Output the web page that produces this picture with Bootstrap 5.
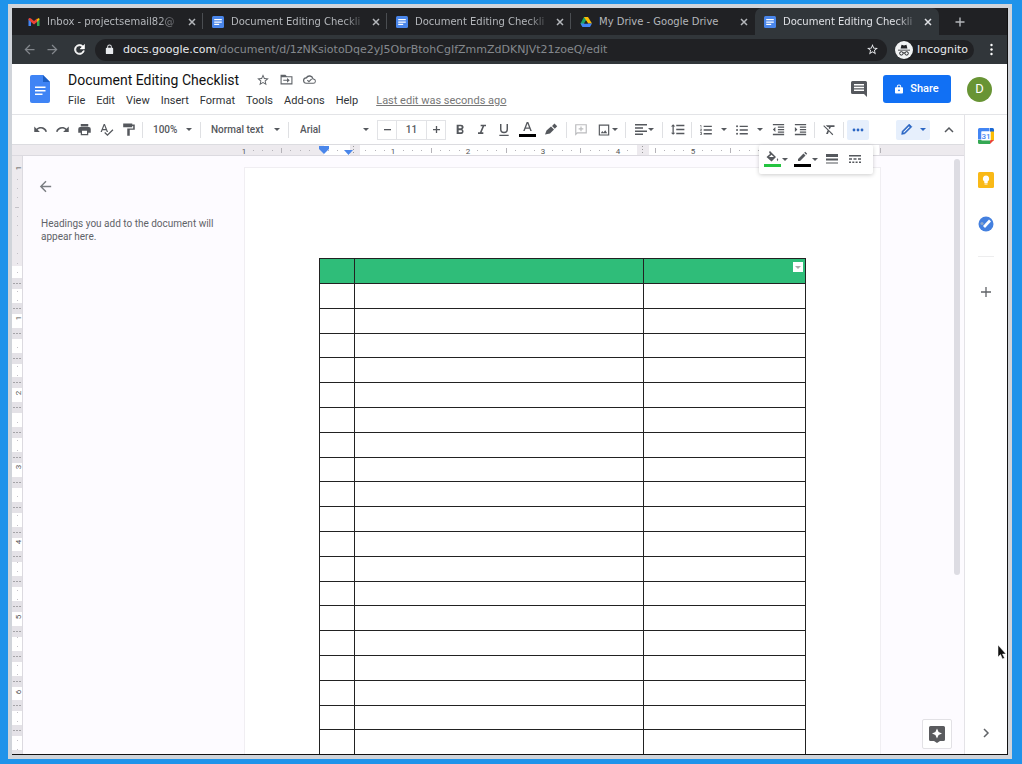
<!DOCTYPE html>
<html lang="en">
<head>
<meta charset="utf-8">
<meta name="viewport" content="width=device-width, initial-scale=1">
<title>Document Editing Checklist</title>
<link href="https://cdn.jsdelivr.net/npm/bootstrap@5.3.0/dist/css/bootstrap.min.css" rel="stylesheet">
<style>
:root{--ui:Roboto,"Liberation Sans",sans-serif;--chrome:"DejaVu Sans",sans-serif;--ink:#55585d}
body{font-family:var(--ui);font-size:11px;line-height:14px;background:#1f93ea;padding:4px 10px 5px 8px;color:#3c4043}
svg{display:block;fill:currentColor;flex:none}
button,select,input{font:inherit;color:inherit}
button{background:none;border:0;padding:0;display:flex;align-items:center;justify-content:center;flex:none}
.window-frame{border:4px solid #d0d4da;background:#fff}
.window-body{border:solid #111;border-width:0 1px 1px 0;min-height:0}
/* browser */
.tab-strip{height:27px;flex:none;background:#202124;padding-left:7px;font:10px/14px var(--chrome);color:#b4b7bb}
.browser-tab{flex:0 1 184px;min-width:0;padding:0 7px 0 9px;position:relative}
.browser-tab.sep::after{content:"";position:absolute;right:0;top:5px;height:16px;width:1px;background:#4a4d51}
.browser-tab.current{background:#31363a;color:#dfe1e5;border-radius:7px 7px 0 0}
.browser-tab a{color:inherit;text-decoration:none;white-space:nowrap;margin-left:7px;-webkit-mask-image:linear-gradient(to right,#000 112px,#0003 132px)}
.url-row{height:29px;flex:none;background:#31363a;padding:0 14px 0 10px;color:#83878c}
.url-pill{background:#202124;border-radius:11px;height:22px;color:#e8eaed;padding:0 8px 0 9px;font:11px/14px var(--chrome)}
.url-pill span{color:#85898e}
.incog{background:#202124;border-radius:11px;height:20px;color:#e8eaed;font:11px/14px var(--chrome);padding-right:6px}
/* header */
.doc-header{height:50px;flex:none;padding:0 15px 0 18px}
.doc-names{margin-left:18px}
.doc-title{font-size:14px;line-height:18px;border:0;padding:0;width:174px;color:#111;background:none}
.title-line{gap:10px;color:#5f6368}
.menu-line{gap:11px;margin-top:5px}
.menu-line a{color:#303336;text-decoration:none}
.menu-line a.edit-note{color:#777;text-decoration:underline;margin-left:7px}
.share-btn{background:#1170f4;color:#fff;width:68px;height:28px;border-radius:3px;font-weight:500;gap:7px}
.avatar{width:25px;height:25px;border-radius:50%;background:#689434;color:#fff;font-size:13px}
.work{border-top:1px solid #e3e4e7}
/* toolbar */
.tool-bar{height:30px;flex:none;padding:0 4px 0 17px;color:var(--ink);font-size:10px;font-weight:500;border-bottom:1px solid #dcdce0}
.tool-bar button{height:20px;width:22px}
.tool-bar .wide{width:24px}
.tool-bar .drop{width:30px;gap:1px}
.tool-bar .drop.list-drop{width:36px;gap:8px}
.tool-bar .drop.mode{width:34px;gap:7px}
.drop::after{content:"";border:3px solid transparent;border-top-color:currentColor;border-bottom:0}
.divide{width:1px;height:16px;background:#dfe0e3;margin:0 3px;flex:none}
.tool-bar select{appearance:none;border:0;padding:0 14px 0 7px;height:20px;outline:0;background:url("data:image/svg+xml,%3Csvg xmlns='http://www.w3.org/2000/svg' width='6' height='3'%3E%3Cpath d='M0 0h6L3 3z' fill='%2355585d'/%3E%3C/svg%3E") no-repeat right 5px center;flex:none}
.zoom-sel{width:51px}.style-sel{width:81px}.tool-bar .font-sel{width:82px;padding-left:8px}
.stepper{border:1px solid #e2e3e6;height:20px;margin:0 3px}
.stepper button{width:18px;height:18px}
.stepper input{width:31px;height:18px;border:solid #e2e3e6;border-width:0 1px;text-align:center;padding:0}
.tool-bar .on{background:#e6effc;color:#2b66c4;border-radius:2px}
.overflow-menu{position:absolute;right:-4px;top:25px;height:29px;background:#fff;border-radius:2px;box-shadow:0 1px 4px #0003;padding:0 6px 0 2px;z-index:3;color:var(--ink)}
.h-ruler{height:11px;flex:none;background:#edeaee;border-bottom:1px solid #dcdae0}
.ruler-text{font:8px Roboto,sans-serif;fill:#555}
.v-ruler{width:11px;background:#edeaee;border-right:1px solid #dcdae0}
/* canvas */
.doc-canvas{background:#fdfbff}
.outline-pane{width:221px;flex:none;padding:22px 20px 0 14px;font-size:10px;line-height:13px;color:#5f6368}
.outline-pane p{margin:22px 0 0 4px}
.sheet{flex:0 1 637px;background:#fff;margin-top:11px;border:1px solid #f0eef2;border-bottom:0;padding:90px 74px 0}
.check-grid{width:100%;height:547px;table-layout:fixed;border-collapse:collapse}
.check-grid td,.check-grid th{border:1px solid #222;padding:0}
.check-grid th{background:#2fbd79;height:25px}
.cell-menu{width:10px;height:10px;background:#fff;margin:-8px 2px 0 auto;color:#aaa}
.scroll-thumb{position:absolute;right:4px;top:3px;width:6px;height:416px;border-radius:3px;background:#dddce3}
.explore{position:absolute;right:12px;bottom:5px;width:30px;height:30px;background:#fff;border:1px solid #e2e1e5;border-radius:2px;color:#5a5b5e}
.side-rail{width:43px;flex:none;border-left:1px solid #e4e3e7;padding:13px 0 14px;color:#606367}
.side-rail hr{width:16px;margin:0;border-color:#b8b8bc}
.cursor{position:fixed;left:97.6vw;top:644px;z-index:9}
</style>
</head>
<body class="vh-100 overflow-hidden d-flex flex-column">
<svg class="d-none">
<symbol id="docs-ico" viewBox="0 0 12 12"><rect width="12" height="12" rx="1.5" fill="#4a86ea"/><path d="M2.2 3h7.600v1.300H2.200zM2.200 5.400h7.600v1.300H2.200zM2.200 7.800h5v1.300h-5z" fill="#fff"/></symbol>
<symbol id="x-ico" viewBox="0 0 8 8"><path d="M1 1l6 6M7 1L1 7" stroke="currentColor" stroke-width="1.500"/></symbol>
<symbol id="lock-ico" viewBox="0 0 24 24"><path d="M18 8h-1V6A5 5 0 0 0 7 6v2H6a2 2 0 0 0-2 2v10a2 2 0 0 0 2 2h12a2 2 0 0 0 2-2V10a2 2 0 0 0-2-2zM9 6a3 3 0 0 1 6 0v2H9z"/></symbol>
<symbol id="star-ico" viewBox="0 0 24 24"><path d="M22 9.240l-7.190-.62L12 2 9.190 8.630 2 9.240l5.460 4.730L5.820 21 12 17.270 18.180 21l-1.630-7.030zM12 15.400l-3.760 2.270 1-4.280-3.320-2.880 4.380-.38L12 6.100l1.710 4.040 4.380.38-3.320 2.880 1 4.280z"/></symbol>
<symbol id="back-ico" viewBox="0 0 24 24"><path d="M20 11H7.830l5.590-5.590L12 4l-8 8 8 8 1.410-1.410L7.830 13H20z"/></symbol>
</svg>
<main class="window-frame flex-grow-1 d-flex flex-column overflow-hidden">
<div class="window-body flex-grow-1 d-flex flex-column">

<nav class="tab-strip d-flex" aria-label="Tabs">
 <div class="browser-tab sep d-flex align-items-center"><svg width="12" height="12" viewBox="0 0 24 24"><path d="M1 5v15h5V10z" fill="#4285f4"/><path d="M23 5v15h-5V10z" fill="#34a853"/><path d="M18 6l4-2 1 3-5 5z" fill="#fbbc04"/><path d="M1 7c0-3 3-4 5-2l6 5 6-5v7l-6 5-6-5z" fill="#ea4335"/></svg><a href="#">Inbox - projectsemail82@</a><button class="ms-auto" aria-label="Close"><svg width="8" height="8"><use href="#x-ico"/></svg></button></div>
 <div class="browser-tab sep d-flex align-items-center"><svg width="12" height="12"><use href="#docs-ico"/></svg><a href="#">Document Editing Checkli</a><button class="ms-auto" aria-label="Close"><svg width="8" height="8"><use href="#x-ico"/></svg></button></div>
 <div class="browser-tab sep d-flex align-items-center"><svg width="12" height="12"><use href="#docs-ico"/></svg><a href="#">Document Editing Checkli</a><button class="ms-auto" aria-label="Close"><svg width="8" height="8"><use href="#x-ico"/></svg></button></div>
 <div class="browser-tab d-flex align-items-center"><svg width="12" height="12" viewBox="0 0 24 24"><path d="M8 2h8L5 22 1 15z" fill="#1fa463"/><path d="M8 2h8l8 13h-8z" fill="#fbbc04"/><path d="M1 15h23l-4 7H5z" fill="#4285f4"/><path d="M12 9l4 6H8z" fill="#202124"/></svg><a href="#" style="-webkit-mask-image:none">My Drive - Google Drive</a><button class="ms-auto" aria-label="Close"><svg width="8" height="8"><use href="#x-ico"/></svg></button></div>
 <div class="browser-tab current d-flex align-items-center"><svg width="12" height="12"><use href="#docs-ico"/></svg><a href="#">Document Editing Checkli</a><button class="ms-auto" aria-label="Close"><svg width="8" height="8"><use href="#x-ico"/></svg></button></div>
 <button class="ms-3" style="color:inherit" aria-label="New tab"><svg width="10" height="10" viewBox="0 0 10 10"><path d="M5 .5v9M.5 5h9" stroke="currentColor" stroke-width="1.400"/></svg></button>
</nav>

<div class="url-row d-flex align-items-center">
 <button aria-label="Back"><svg width="15" height="15"><use href="#back-ico"/></svg></button>
 <button class="ms-2" aria-label="Forward"><svg width="15" height="15" viewBox="0 0 24 24"><path d="M4 11h12.170l-5.590-5.590L12 4l8 8-8 8-1.410-1.410L16.170 13H4z"/></svg></button>
 <button class="ms-2 ps-1 text-white me-2" aria-label="Reload"><svg width="15" height="15" viewBox="0 0 24 24"><path d="M17.650 6.350A8 8 0 1 0 19.730 14h-2.080A6 6 0 1 1 12 6c1.660 0 3.140.69 4.220 1.780L13 11h7V4z" stroke="currentColor"/></svg></button>
 <div class="url-pill d-flex align-items-center flex-grow-1"><svg width="11" height="11" class="me-2"><use href="#lock-ico"/></svg><div class="flex-grow-1">docs.google.com<span>/document/d/1zNKsiotoDqe2yJ5ObrBtohCgIfZmmZdDKNJVt21zoeQ/edit</span></div><button aria-label="Bookmark"><svg width="13" height="13"><use href="#star-ico"/></svg></button></div>
 <div class="incog ms-2 d-flex align-items-center"><svg width="18" height="18" viewBox="0 0 24 24" class="me-1"><circle cx="12" cy="12" r="12" fill="#f1f3f4"/><path d="M4 11.500h16v1H4zM7.500 10l1.200-5 3.300 1 3.300-1 1.200 5z" fill="#202124"/><g fill="none" stroke="#202124" stroke-width="1.300"><circle cx="8.500" cy="16.500" r="2.300"/><circle cx="15.500" cy="16.500" r="2.300"/><path d="M10.800 16q1.200-.7 2.400 0"/></g></svg>Incognito</div>
 <button class="ms-3 text-white" aria-label="Menu"><svg width="3" height="13" viewBox="0 0 3 13"><circle cx="1.500" cy="2" r="1.200"/><circle cx="1.500" cy="6.500" r="1.200"/><circle cx="1.500" cy="11" r="1.200"/></svg></button>
</div>

<header class="doc-header d-flex align-items-center">
 <svg width="20" height="28" viewBox="0 0 20 28"><path d="M2 0h11l7 7v19a2 2 0 0 1-2 2H2a2 2 0 0 1-2-2V2a2 2 0 0 1 2-2z" fill="#3f84f5"/><path d="M13 0l7 7h-7z" fill="#1c5fc4"/><path d="M5 11.500h10.500V13H5zM5 15h10.500v1.500H5zM5 18.500h7.500V20H5z" fill="#fff"/></svg>
 <div class="doc-names flex-grow-1">
  <div class="title-line d-flex align-items-center"><input class="doc-title" value="Document Editing Checklist" aria-label="Document title">
   <button class="ms-1" aria-label="Star"><svg width="14" height="14"><use href="#star-ico"/></svg></button>
   <button aria-label="Move"><svg width="13" height="13" viewBox="0 0 24 24"><path d="M1 3h9l2.500 3H23v15H1zM3 8v11h18V8z" fill-rule="evenodd"/><path d="M6 12.500h7V9l5 4.500-5 4.500v-3.500H6z"/></svg></button>
   <button aria-label="Saved to Drive"><svg width="13" height="13" viewBox="0 0 24 24"><path d="M19.350 10.040A7.490 7.490 0 0 0 5.350 8.040 6 6 0 0 0 6 20h13a5 5 0 0 0 .35-9.960zM19 18H6a4 4 0 0 1 .5-8h.6a5.500 5.500 0 0 1 10.500 2H19a3 3 0 0 1 0 6z"/><path d="M8 13l3 3 5-5" fill="none" stroke="currentColor" stroke-width="2"/></svg></button>
  </div>
  <nav class="menu-line d-flex" aria-label="Document menu"><a href="#">File</a><a href="#">Edit</a><a href="#">View</a><a href="#">Insert</a><a href="#">Format</a><a href="#">Tools</a><a href="#">Add-ons</a><a href="#">Help</a><a href="#" class="edit-note">Last edit was seconds ago</a></nav>
 </div>
 <button class="me-3" style="color:#55585d" aria-label="Comments"><svg width="16" height="16" viewBox="0 0 16 16"><path d="M1.500 0h13A1.500 1.500 0 0 1 16 1.500V16l-3-3H1.500A1.500 1.500 0 0 1 0 11.500v-10A1.500 1.500 0 0 1 1.500 0z"/><path d="M3 3h10v1.500H3zM3 5.800h10v1.500H3zM3 8.600h10v1.500H3z" fill="#fff"/></svg></button>
 <button class="share-btn"><svg width="8" height="10" viewBox="0 0 18 22"><path d="M16 7h-2V6A5 5 0 0 0 4 6v1H2a2 2 0 0 0-2 2v10a2 2 0 0 0 2 2h14a2 2 0 0 0 2-2V9a2 2 0 0 0-2-2zM6 6a3 3 0 0 1 6 0v1H6zm3 6a2 2 0 1 1 0 4 2 2 0 0 1 0-4z" fill-rule="evenodd"/></svg>Share</button>
 <button class="avatar ms-3" aria-label="Account">D</button>
</header>

<div class="work d-flex flex-grow-1 overflow-hidden">
<div class="flex-grow-1 d-flex flex-column" style="min-width:0">
 <div class="tool-bar d-flex align-items-center" role="toolbar">
  <button aria-label="Undo"><svg width="15" height="15" viewBox="0 0 24 24"><path d="M12.500 8c-2.650 0-5.050.99-6.900 2.600L2 7v9h9l-3.620-3.620A7.970 7.970 0 0 1 20.080 16l2.370-.78A10.500 10.500 0 0 0 12.500 8z"/></svg></button>
  <button aria-label="Redo"><svg width="15" height="15" viewBox="0 0 24 24"><path d="M11.500 8c2.650 0 5.050.99 6.900 2.600L22 7v9h-9l3.620-3.620A7.970 7.970 0 0 0 3.920 16l-2.370-.78A10.500 10.500 0 0 1 11.500 8z"/></svg></button>
  <button aria-label="Print"><svg width="15" height="15" viewBox="0 0 24 24"><path d="M19 8H5a3 3 0 0 0-3 3v6h4v4h12v-4h4v-6a3 3 0 0 0-3-3zm-3 11H8v-5h8zM18 3H6v4h12z"/></svg></button>
  <button aria-label="Spelling"><svg width="15" height="15" viewBox="0 0 24 24"><path d="M12.450 16h2.090L9.430 3H7.570L2.460 16h2.090l1.120-3h5.640zm-6.020-5L8.500 5.480 10.570 11zm15.160.59l-8.090 8.090L9.830 16l-1.410 1.410 5.090 5.090L23 13z"/></svg></button>
  <button aria-label="Paint format"><svg width="15" height="15" viewBox="0 0 24 24"><path d="M18 4V2.500H3.500v6H18V6.500h1.500v4H10V22h4v-9.500h8V4z"/></svg></button>
  <span class="divide"></span>
  <select class="zoom-sel" aria-label="Zoom"><option>100%</option></select>
  <span class="divide"></span>
  <select class="style-sel" aria-label="Styles"><option>Normal text</option></select>
  <span class="divide"></span>
  <select class="font-sel" aria-label="Font"><option>Arial</option></select>
  <div class="stepper d-flex"><button aria-label="Decrease font size"><svg width="7" height="7" viewBox="0 0 7 7"><path d="M0 3h7v1.300H0z"/></svg></button><input value="11" aria-label="Font size"><button aria-label="Increase font size"><svg width="7" height="7" viewBox="0 0 7 7"><path d="M0 3h7v1.300H0zM2.850 0h1.300v7h-1.300z"/></svg></button></div>
  <button aria-label="Bold"><svg width="16" height="16" viewBox="0 0 24 24"><path d="M15.600 10.790A4 4 0 0 0 17.500 7.500 4 4 0 0 0 13.500 4H7v14h7.040a3.970 3.970 0 0 0 1.560-7.210zM10 6.500h3a1.500 1.500 0 0 1 0 3h-3zm3.500 9H10v-3h3.500a1.500 1.500 0 0 1 0 3z"/></svg></button>
  <button aria-label="Italic"><svg width="16" height="16" viewBox="0 0 24 24"><path d="M10 4v2.500h2.700L8.900 15.500H6V18h8v-2.500h-2.500l3.800-9H18V4z"/></svg></button>
  <button aria-label="Underline"><svg width="16" height="16" viewBox="0 0 24 24"><path d="M12 17a6 6 0 0 0 6-6V3h-2.200v8a3.800 3.800 0 0 1-7.600 0V3H6v8a6 6 0 0 0 6 6zM5 19v2h14v-2z"/></svg></button>
  <button class="wide" aria-label="Text color"><svg width="17" height="17" viewBox="0 0 17 17"><path d="M7.700 1L4.200 10h1.500l.8-2.200h4l.8 2.200h1.500L9.300 1zM7 6.500l1.500-4.100L10 6.500z"/><path d="M0 13h17v3H0z" fill="#000"/></svg></button>
  <button class="wide" aria-label="Highlight color"><svg width="14" height="14" viewBox="0 0 14 14"><path d="M1 11.500l1.500-4L7 3.500l3 3L6 10.500zM8 3l2.500-2.500 2.700 2.700L10.800 5.800z"/></svg></button>
  <span class="divide"></span>
  <button style="opacity:.4" aria-label="Add comment"><svg width="14" height="14" viewBox="0 0 24 24"><path d="M2 2h20v16H6l-4 4zM4 4v12.500L5.500 16H20V4zM11 6h2v3h3v2h-3v3h-2v-3H8V9h3z" fill-rule="evenodd"/></svg></button>
  <button class="drop" aria-label="Insert image"><svg width="14" height="14" viewBox="0 0 24 24"><path d="M19 4.500v15H5v-15zM21 2.500H3v19h18zM14.100 12.400l-3 3.870L9 13.640 6.500 17.500h11z" fill-rule="evenodd"/></svg></button>
  <span class="divide"></span>
  <button class="drop" aria-label="Align"><svg width="13" height="13" viewBox="0 0 13 13"><path d="M1 1h12v1.500H1zM1 4.200h8v1.500H1zM1 7.400h12v1.500H1zM1 10.600h8v1.500H1z"/></svg></button>
  <span class="divide"></span>
  <button aria-label="Line spacing"><svg width="15" height="15" viewBox="0 0 24 24"><path d="M6 7h2.500L5 3.500 1.500 7H4v10H1.500L5 20.500 8.500 17H6zM10 4.500v2.200h13V4.500zM10 19.500h13v-2.200H10zM10 13.100h13v-2.200H10z"/></svg></button>
  <span class="divide"></span>
  <button class="drop list-drop" aria-label="Numbered list"><svg width="14" height="14" viewBox="0 0 24 24"><path d="M2 17h2v.5H3v1h1v.5H2v1h3v-4H2zM3 8h1V4H2v1h1zM2 11h1.800L2 13.100v.9h3v-1H3.200L5 10.900V10H2zM8 4.500v2.200h14V4.500zM8 19.500h14v-2.200H8zM8 13.100h14v-2.200H8z"/></svg></button>
  <button class="drop list-drop" aria-label="Bulleted list"><svg width="14" height="14" viewBox="0 0 24 24"><circle cx="3.500" cy="5.500" r="1.700"/><circle cx="3.500" cy="12" r="1.700"/><circle cx="3.500" cy="18.500" r="1.700"/><path d="M8 4.500v2.200h14V4.500zM8 19.500h14v-2.200H8zM8 13.100h14v-2.200H8z"/></svg></button>
  <button aria-label="Decrease indent"><svg width="15" height="15" viewBox="0 0 24 24"><path d="M11 17h10v-2H11zM3 12l4 4V8zM3 21h18v-2.200H3zM3 3v2.200h18V3zM11 9h10V7H11zM11 13h10v-2H11z"/></svg></button>
  <button aria-label="Increase indent"><svg width="15" height="15" viewBox="0 0 24 24"><path d="M3 21h18v-2.200H3zM3 8v8l4-4zM11 17h10v-2H11zM3 3v2.200h18V3zM11 9h10V7H11zM11 13h10v-2H11z"/></svg></button>
  <span class="divide"></span>
  <button aria-label="Clear formatting"><svg width="15" height="15" viewBox="0 0 24 24"><path d="M3.270 5L2 6.270l6.970 6.970L6.500 19h3l1.570-3.660L16.730 21 18 19.730zM6 5v.18L8.820 8h2.400l-.72 1.680 2.100 2.100L14.210 8H20V5z"/></svg></button>
  <span class="divide"></span>
  <div class="position-relative">
   <button class="on" aria-label="More" aria-expanded="true"><svg width="12" height="4" viewBox="0 0 12 4"><circle cx="2" cy="2" r="1.400"/><circle cx="6" cy="2" r="1.400"/><circle cx="10" cy="2" r="1.400"/></svg></button>
   <div class="overflow-menu d-flex align-items-center">
    <button class="drop" aria-label="Background color"><svg width="17" height="18" viewBox="0 0 17 18"><path d="M6 1l6 6-4.500 4.500L2.500 7 6 4 5 2zM5 7h5L7.500 4.700z" fill-rule="evenodd"/><path d="M13.500 8q1.500 2 0 3.200-1.500-1.200 0-3.200z"/><path d="M0 14h17v3H0z" fill="#24c440"/></svg></button>
    <button class="drop" aria-label="Border color"><svg width="17" height="18" viewBox="0 0 17 18"><path d="M4 9l5.500-5.500 2 2L6 11H4zM10.200 2.800l1-1 2 2-1 1z"/><path d="M0 14h17v3H0z" fill="#000"/></svg></button>
    <button aria-label="Border width"><svg width="12" height="12" viewBox="0 0 12 12"><path d="M0 1h12v3H0zM0 5.500h12v2H0zM0 9.500h12v1H0z"/></svg></button>
    <button class="wide" aria-label="Border dash"><svg width="12" height="12" viewBox="0 0 12 12"><path d="M0 2h12v1.500H0zM0 5.300h3v1.500H0zM4.500 5.300h3v1.500h-3zM9 5.300h3v1.500H9zM0 8.600h2v1.500H0zM3.300 8.600h2v1.500h-2zM6.600 8.600h2v1.500h-2zM10 8.600h2v1.500h-2z"/></svg></button>
   </div>
  </div>
  <button class="drop mode on ms-auto me-2" aria-label="Editing mode"><svg width="13" height="13" viewBox="0 0 24 24"><path d="M3 21l1-6L17 2l5 5L9 20zM6 16l-.5 2.500L8 18 18.500 7.500 16.500 5.500z" fill-rule="evenodd" stroke="currentColor"/></svg></button>
  <button aria-label="Hide menus"><svg width="10" height="10" viewBox="0 0 10 10"><path d="M1 7l4-4 4 4" fill="none" stroke="currentColor" stroke-width="1.500"/></svg></button>
 </div>
 <svg class="h-ruler w-100" id="hRuler" role="img" aria-label="Ruler"></svg>
 <div class="d-flex flex-grow-1 overflow-hidden">
  <svg class="v-ruler h-auto" id="vRuler" role="img" aria-label="Vertical ruler"></svg>
  <div class="doc-canvas position-relative flex-grow-1 d-flex overflow-hidden">
   <aside class="outline-pane"><button style="color:#7b7e82" aria-label="Close outline"><svg width="17" height="17"><use href="#back-ico"/></svg></button><p>Headings you add to the document will appear here.</p></aside>
   <article class="sheet"><table class="check-grid" aria-label="Checklist"><colgroup><col style="width:35px"><col><col style="width:162px"></colgroup><thead><tr><th></th><th></th><th><button class="cell-menu" aria-label="Table options"><svg width="6" height="3" viewBox="0 0 6 3"><path d="M0 0h6L3 3z"/></svg></button></th></tr></thead><tbody id="rows"></tbody></table></article>
   <div class="scroll-thumb"></div>
   <button class="explore" aria-label="Explore"><svg width="16" height="17" viewBox="0 0 16 17"><path d="M1.500 0h13A1.500 1.500 0 0 1 16 1.500v12a1.500 1.500 0 0 1-1.500 1.500H11l-3 2-3-2H1.500A1.500 1.500 0 0 1 0 13.500v-12A1.500 1.500 0 0 1 1.500 0z"/><path d="M8 2.500l1.600 3.400L13 7.500 9.600 9.100 8 12.500 6.400 9.100 3 7.500l3.400-1.600z" fill="#fff"/></svg></button>
  </div>
 </div>
</div>
<aside class="side-rail d-flex flex-column align-items-center">
 <button aria-label="Calendar"><svg width="16" height="16" viewBox="0 0 16 16"><path d="M1.500 0h10v3.500h-8v8H0v-10A1.500 1.500 0 0 1 1.500 0z" fill="#4285f4"/><path d="M12 0h2.500A1.500 1.500 0 0 1 16 1.500V4h-4z" fill="#1967d2"/><path d="M12.500 3.500H16v9h-3.500z" fill="#fbbc04"/><path d="M0 12h12v4H1.500A1.500 1.500 0 0 1 0 14.500z" fill="#34a853"/><path d="M12 12h4l-4 4z" fill="#ea4335"/><path d="M3.500 3.500h9v9h-9z" fill="#fff"/><text x="8" y="11" font-size="8" font-weight="500" text-anchor="middle" fill="#4285f4">31</text></svg></button>
 <button class="mt-4" aria-label="Keep"><svg width="16" height="24" viewBox="0 0 16 24"><rect y="4" width="16" height="16" rx="1.500" fill="#f9b917"/><path d="M8 7.500a3.200 3.200 0 0 0-1.700 5.900V15h3.400v-1.600A3.200 3.200 0 0 0 8 7.500zM6.500 15.500h3v1h-3z" fill="#fff"/></svg></button>
 <button class="mt-4" aria-label="Tasks"><svg width="16" height="16" viewBox="0 0 16 16"><circle cx="8" cy="8" r="7.500" fill="#4480df"/><circle cx="4" cy="7.500" r="1.600" fill="#8da6c8"/><path d="M5 10l2 2 6-6.500-2-2z" fill="#fff"/></svg></button>
 <hr class="mt-4">
 <button class="mt-4" aria-label="Get add-ons"><svg width="10" height="22" viewBox="0 0 10 22"><path d="M5 6v10M0 11h10" stroke="currentColor" stroke-width="1.300"/></svg></button>
 <button class="mt-auto" aria-label="Hide side panel"><svg width="10" height="14" viewBox="0 0 10 14"><path d="M3 3l4 4-4 4" fill="none" stroke="currentColor" stroke-width="1.500"/></svg></button>
</aside>
</div>
</div>
</main>
<svg class="cursor" width="10" height="16" viewBox="0 0 10 16"><path d="M1 1v12l2.500-2.500L5.500 15l2-1-2-4H9z" fill="#111" stroke="#fff" stroke-width=".5"/></svg>
<script src="https://cdn.jsdelivr.net/npm/bootstrap@5.3.0/dist/js/bootstrap.bundle.min.js"></script>
<script>
// blank checklist rows
document.getElementById('rows').innerHTML = '<tr><td></td><td></td><td></td></tr>'.repeat(21);

const INCH = 74.8, rect = (x, y, w, h, c) => `<rect x="${x}" y="${y}" width="${w}" height="${h}" fill="${c}"/>`;

// horizontal ruler: white spans are the table columns
const zeroX = 306.5;
let h = rect(312, 0, 26, 10, '#fff') + rect(348, 0, 277, 10, '#fff') + rect(637, 0, 230, 10, '#fff');
for (let i = -8; i <= 60; i++) {
  const x = Math.round(zeroX + i * INCH / 8);
  if (i % 8 === 0) { if (i && x < 860) h += `<text class="ruler-text" x="${x}" y="9" text-anchor="middle">${Math.abs(i / 8)}</text>`; }
  else if (x < 870 && (x < 335 || x > 350) && (x < 624 || x > 638)) h += rect(x, i % 4 ? 5 : 3, 1, i % 4 ? 1 : 5, '#b5b3b8');
}
for (const x of [341, 630]) for (const y of [1, 4, 7]) h += rect(x, y, 1, 1, '#999');
h += '<path d="M307 1h10v3l-5 5-5-5z" fill="#4a86ea"/><path d="M332 5h9l-4.500 5z" fill="#4a86ea"/>';
document.getElementById('hRuler').innerHTML = h;

// vertical ruler: grey blocks sit on the row borders
const zeroY = 88, rowH = 24.85;
let v = rect(0, 110, 10, 700, '#fff');
for (let i = -8; i <= 60; i++) {
  const y = Math.round(zeroY + i * INCH / 8);
  if (i % 8) v += rect(i % 4 ? 5 : 3, y, i % 4 ? 1 : 4, 1, '#c4c2c8');
}
for (let k = 0; k < 20; k++) {
  const y = Math.round(122 + k * rowH);
  v += rect(0, y, 10, 11, '#e4e2e7');
  for (const x of [1, 4, 7]) v += rect(x, y + 5, 2, 1, '#a5a4a8');
}
for (const n of [-1, 1, 2, 3, 4, 5, 6]) {
  const y = Math.round(zeroY + n * INCH) - 1;
  v += `<text class="ruler-text" text-anchor="middle" transform="translate(9 ${y}) rotate(-90)">${Math.abs(n)}</text>`;
}
document.getElementById('vRuler').innerHTML = v;
</script>
</body>
</html>
